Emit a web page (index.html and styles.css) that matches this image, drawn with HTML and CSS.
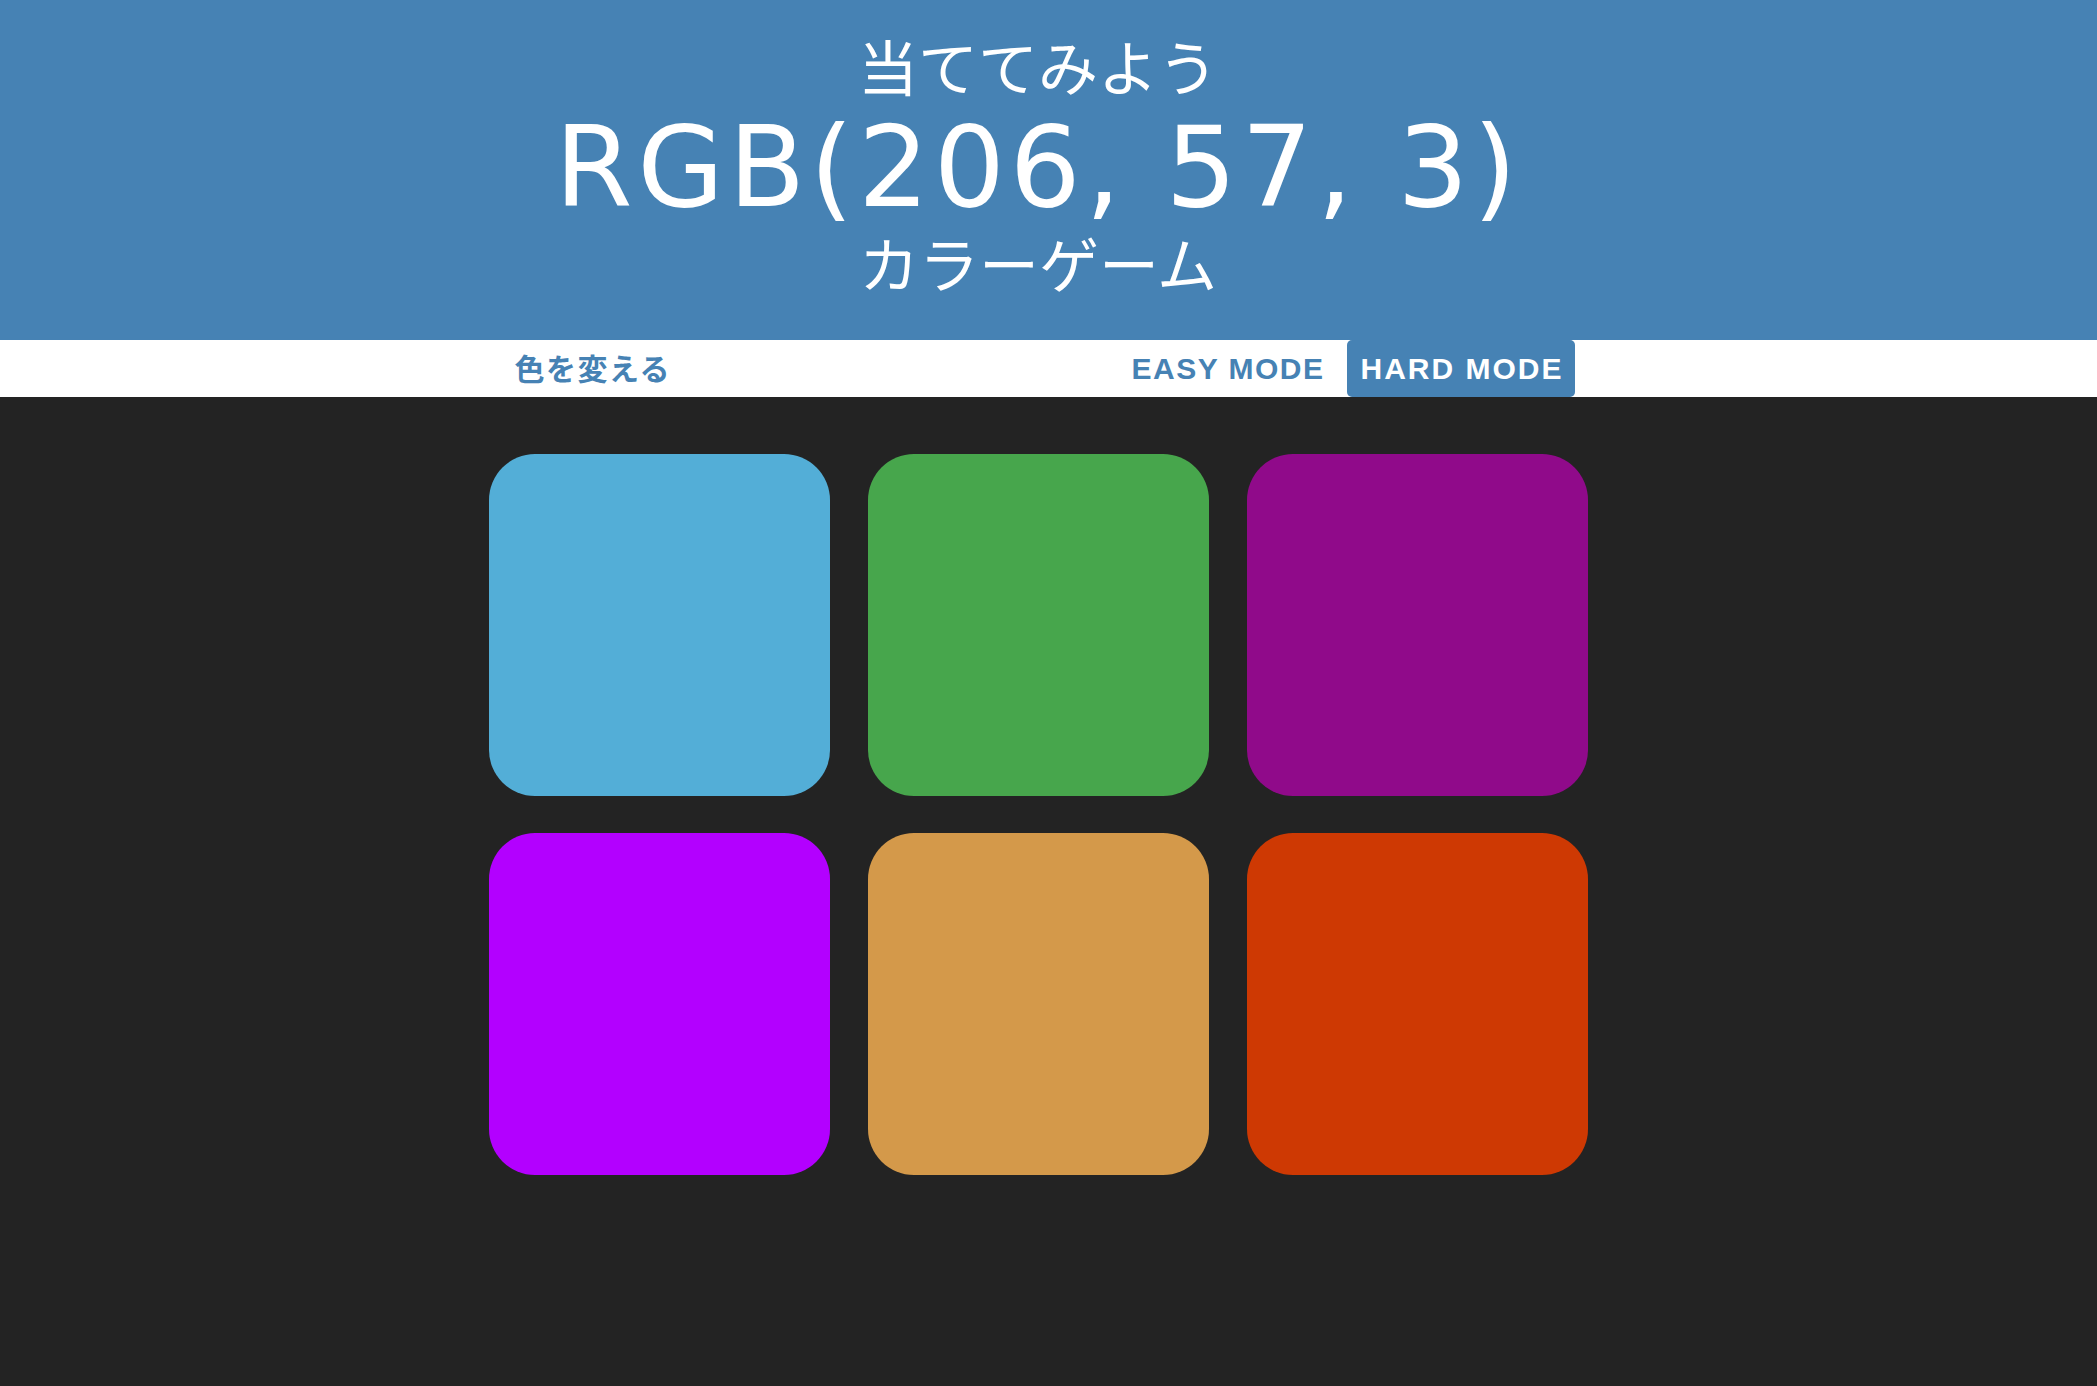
FILE: index.html
```html
<!DOCTYPE html>
<html lang="ja">
<head>
<meta charset="utf-8">
<title>カラーゲーム</title>
<link rel="stylesheet" href="styles.css">
</head>
<body>
<header class="header">
  <h1 class="title wrap">
    <span class="line-small">当ててみよう</span>
    <span class="line-big">RGB(206, 57, 3)</span>
    <span class="line-small line-last">カラーゲーム</span>
  </h1>
</header>
<nav class="stripe">
  <div class="stripe-inner wrap">
    <button class="btn reset">色を変える</button>
    <span class="message"></span>
    <button class="btn mode">EASY MODE</button>
    <button class="btn mode selected">HARD MODE</button>
  </div>
</nav>
<main class="board wrap">
  <div class="square sq-blue"></div>
  <div class="square sq-green"></div>
  <div class="square sq-purple"></div>
  <div class="square sq-violet"></div>
  <div class="square sq-tan"></div>
  <div class="square sq-orange"></div>
</main>
</body>
</html>
```
FILE: styles.css
```css
html, body {
  margin: 0;
  padding: 0;
}
body {
  background: #232323;
  font-family: "DejaVu Sans", "Noto Sans CJK JP", sans-serif;
  min-height: 1386px;
}
.wrap {
  width: 1099px;
  margin-left: calc(50% - 560px);
  box-sizing: border-box;
}
.header {
  background: #4682b4;
  color: #fff;
  height: 340px;
  box-sizing: border-box;
  padding-top: 29px;
}
.title {
  margin-top: 0;
  margin-bottom: 0;
  font-weight: normal;
  text-align: center;
  display: flex;
  flex-direction: column;
  align-items: center;
}
.line-small {
  font-family: "Noto Sans CJK JP", sans-serif;
  font-size: 60px;
  line-height: 71px;
  font-weight: 400;
  white-space: nowrap;
}
.line-last {
  line-height: 56px;
}
.line-big {
  font-family: "DejaVu Sans", sans-serif;
  font-size: 112px;
  line-height: 134px;
  letter-spacing: 4.5px;
  white-space: nowrap;
}
.stripe {
  background: #fff;
  height: 57px;
}
.stripe-inner {
  display: flex;
  align-items: stretch;
  height: 100%;
}
.btn {
  border: none;
  background: none;
  color: #4682b4;
  font-family: "Liberation Sans", "Noto Sans CJK JP", sans-serif;
  font-weight: bold;
  font-size: 30px;
  letter-spacing: 1.5px;
  text-transform: uppercase;
  padding: 0 12px 0 13px;
  margin: 0;
  border-radius: 5px;
  cursor: pointer;
  height: 100%;
}
.reset {
  padding-left: 26px;
  padding-bottom: 4px;
  font-family: "Noto Sans CJK JP", sans-serif;
  font-size: 30px;
  letter-spacing: 1.5px;
}
.message {
  flex: 1;
}
.selected {
  background: #4682b4;
  color: #fff;
  margin-left: 10px;
  margin-right: 13px;
  letter-spacing: 2px;
  padding: 0 11px 0 14px;
}
.board {
  display: grid;
  grid-template-columns: repeat(3, 341px);
  column-gap: 38px;
  row-gap: 37px;
  padding-top: 57px;
}
.square {
  width: 341px;
  height: 342px;
  border-radius: 46px;
}
.sq-blue { background: #53aed7; }
.sq-green { background: #47a64c; }
.sq-purple { background: #900a8a; }
.sq-violet { background: #b300ff; }
.sq-tan { background: #d4994a; }
.sq-orange { background: #ce3903; }
```
